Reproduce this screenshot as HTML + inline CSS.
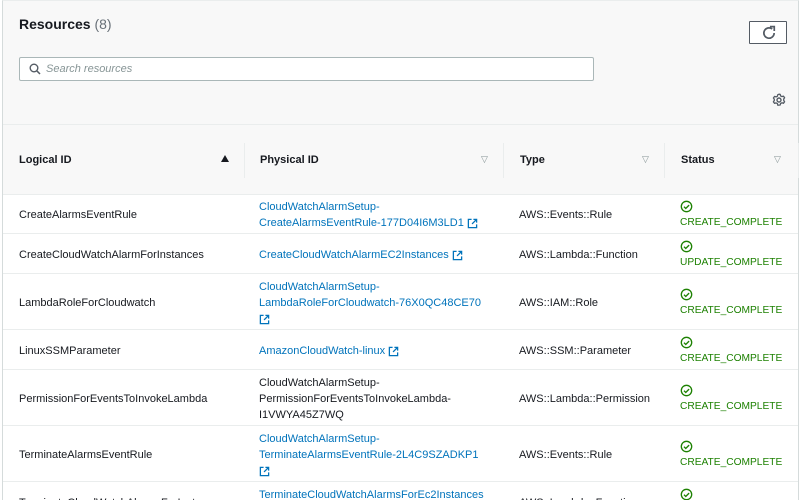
<!DOCTYPE html>
<html><head><meta charset="utf-8"><style>
*{margin:0;padding:0;box-sizing:border-box}
html,body{width:804px;height:500px;overflow:hidden}
body{background:#fff;font-family:"Liberation Sans",Arial,sans-serif;color:#16191f;font-size:11px;position:relative}
.panel{position:absolute;left:2px;top:0;width:797px;height:500px;border-left:1px solid #d5dbdb;border-right:1px solid #d5dbdb;border-top:1px solid #eaeded}
.head{position:absolute;left:0;top:0;width:100%;height:194px;background:#f8f8f8;border-bottom:1px solid #eaeded}
.a{position:absolute}
.title{left:16px;top:15px;font-size:14px;font-weight:bold}
.title span{font-weight:normal;color:#687078}
.btn{left:746px;top:20px;width:38px;height:23px;border:1px solid #545b64;background:#fff;border-radius:1px}
.search{left:16px;top:56px;width:575px;height:24px;border:1px solid #aab7b8;background:#fff;border-radius:2px}
.search i{position:absolute;left:26px;top:5px;font-style:italic;color:#879596;font-size:11px}
.sep{left:0;top:123px;width:100%;height:1px;background:#eaeded}
.th{top:153px;font-weight:bold;font-size:11px;color:#16191f}
.vs{top:142px;width:1px;height:35px;background:#eaeded}
.tri{top:153px;color:#879596;font-size:9px}
.row{position:absolute;left:0;width:100%;border-bottom:1px solid #eaeded;line-height:16px}
.row>div{position:absolute;display:flex;flex-direction:column;justify-content:center;height:100%;top:0;padding-top:3px}
.c1{left:16px}.c2{left:256px;width:240px}.c3{left:516px}.c4{left:677px;font-size:10.2px}
.lk{color:#0073bb}
.ok{color:#1d8102}
svg{display:inline-block;vertical-align:middle}
</style></head><body>
<div class="panel">
<div class="head">
<div class="a title">Resources <span>(8)</span></div>
<div class="a btn"><svg style="position:absolute;left:11px;top:3px" width="16" height="16" viewBox="0 0 14 14"><path d="M11.5 7A4.5 4.5 0 1 1 9.8 3.5" fill="none" stroke="#545b64" stroke-width="1.5"/><path d="M7.8 1.4h3.8v3.8" fill="none" stroke="#545b64" stroke-width="1.5"/></svg></div>
<div class="a search"><svg style="position:absolute;left:9px;top:5px" width="12" height="12" viewBox="0 0 12 12"><circle cx="5" cy="5" r="3.8" fill="none" stroke="#545b64" stroke-width="1.4"/><path d="M7.8 7.8L11 11" stroke="#545b64" stroke-width="1.5"/></svg><i>Search resources</i></div>
<svg class="a" style="left:769px;top:92px" width="14" height="14" viewBox="0 0 14 14"><circle cx="7" cy="7" r="2" fill="none" stroke="#545b64" stroke-width="1.4"/><path d="M7 1.2l1.2.2.4 1.5 1.3.7 1.5-.5 1.2 1.6-.9 1.3v1.4l.9 1.3-1.2 1.6-1.5-.5-1.3.7-.4 1.5-2.4.2-.4-1.6-1.3-.7-1.5.5-1.2-1.6.9-1.3V6.3l-.9-1.3 1.2-1.6 1.5.5 1.3-.7.4-1.5z" fill="none" stroke="#545b64" stroke-width="1.3" stroke-linejoin="round"/></svg>
<div class="a sep"></div>
<div class="a th" style="left:16px">Logical ID</div>
<div class="a" style="left:218px;top:154px;width:0;height:0;border-left:4px solid transparent;border-right:4px solid transparent;border-bottom:7px solid #16191f"></div>
<div class="a vs" style="left:241px"></div>
<div class="a th" style="left:257px">Physical ID</div>
<div class="a tri" style="left:478px">▽</div>
<div class="a vs" style="left:500px"></div>
<div class="a th" style="left:517px">Type</div>
<div class="a tri" style="left:639px">▽</div>
<div class="a vs" style="left:661px"></div>
<div class="a th" style="left:678px">Status</div>
<div class="a tri" style="left:771px">▽</div>
<div class="a vs" style="left:795px"></div>
</div>
</div>
<svg width="0" height="0" style="position:absolute"><defs>
<symbol id="ex" viewBox="0 0 12 12"><path d="M5 1.5H1.5v9h9V7" fill="none" stroke="#0073bb" stroke-width="1.4"/><path d="M7 1.5h3.5V5M10.5 1.5L5.5 6.5" fill="none" stroke="#0073bb" stroke-width="1.4"/></symbol>
<symbol id="ck" viewBox="0 0 14 14"><circle cx="7" cy="7" r="5.6" fill="none" stroke="#1d8102" stroke-width="1.4"/><path d="M4.3 7.2l1.9 1.9 3.6-3.6" fill="none" stroke="#1d8102" stroke-width="1.5"/></symbol>
</defs></svg>
<div style="position:absolute;left:3px;top:194px;width:795px;height:306px;overflow:hidden">
<div class="row" style="top:0;height:40px"><div class="c1">CreateAlarmsEventRule</div><div class="c2 lk"><span>CloudWatchAlarmSetup-</span><span>CreateAlarmsEventRule-177D04I6M3LD1 <svg width="11" height="11"><use href="#ex"/></svg></span></div><div class="c3">AWS::Events::Rule</div><div class="c4 ok"><span><svg width="13" height="13"><use href="#ck"/></svg></span><span>CREATE_COMPLETE</span></div></div>
<div class="row" style="top:40px;height:40px"><div class="c1">CreateCloudWatchAlarmForInstances</div><div class="c2 lk"><span>CreateCloudWatchAlarmEC2Instances <svg width="11" height="11"><use href="#ex"/></svg></span></div><div class="c3">AWS::Lambda::Function</div><div class="c4 ok"><span><svg width="13" height="13"><use href="#ck"/></svg></span><span>UPDATE_COMPLETE</span></div></div>
<div class="row" style="top:80px;height:56px"><div class="c1">LambdaRoleForCloudwatch</div><div class="c2 lk"><span>CloudWatchAlarmSetup-</span><span>LambdaRoleForCloudwatch-76X0QC48CE70</span><span><svg width="11" height="11"><use href="#ex"/></svg></span></div><div class="c3">AWS::IAM::Role</div><div class="c4 ok"><span><svg width="13" height="13"><use href="#ck"/></svg></span><span>CREATE_COMPLETE</span></div></div>
<div class="row" style="top:136px;height:40px"><div class="c1">LinuxSSMParameter</div><div class="c2 lk"><span>AmazonCloudWatch-linux <svg width="11" height="11"><use href="#ex"/></svg></span></div><div class="c3">AWS::SSM::Parameter</div><div class="c4 ok"><span><svg width="13" height="13"><use href="#ck"/></svg></span><span>CREATE_COMPLETE</span></div></div>
<div class="row" style="top:176px;height:56px"><div class="c1">PermissionForEventsToInvokeLambda</div><div class="c2"><span>CloudWatchAlarmSetup-</span><span>PermissionForEventsToInvokeLambda-</span><span>I1VWYA45Z7WQ</span></div><div class="c3">AWS::Lambda::Permission</div><div class="c4 ok"><span><svg width="13" height="13"><use href="#ck"/></svg></span><span>CREATE_COMPLETE</span></div></div>
<div class="row" style="top:232px;height:56px"><div class="c1">TerminateAlarmsEventRule</div><div class="c2 lk"><span>CloudWatchAlarmSetup-</span><span>TerminateAlarmsEventRule-2L4C9SZADKP1</span><span><svg width="11" height="11"><use href="#ex"/></svg></span></div><div class="c3">AWS::Events::Rule</div><div class="c4 ok"><span><svg width="13" height="13"><use href="#ck"/></svg></span><span>CREATE_COMPLETE</span></div></div>
<div class="row" style="top:288px;height:40px"><div class="c1">TerminateCloudWatchAlarmsForInstances</div><div class="c2 lk"><span>TerminateCloudWatchAlarmsForEc2Instances</span><span><svg width="11" height="11"><use href="#ex"/></svg></span></div><div class="c3">AWS::Lambda::Function</div><div class="c4 ok"><span><svg width="13" height="13"><use href="#ck"/></svg></span><span>UPDATE_COMPLETE</span></div></div>
</div>
</body></html>
